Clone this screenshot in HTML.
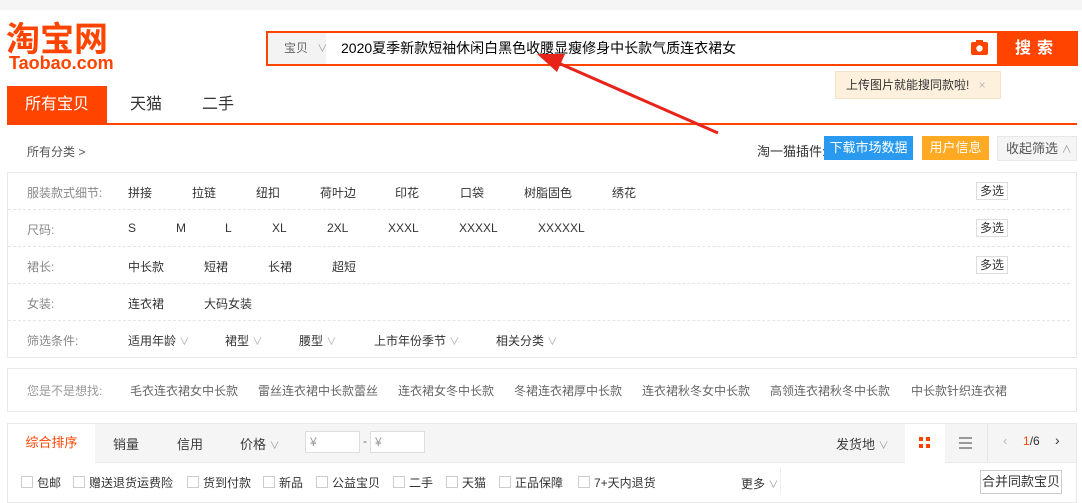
<!DOCTYPE html>
<html><head><meta charset="utf-8"><style>
*{margin:0;padding:0;box-sizing:border-box}
body{width:1082px;height:500px;overflow:hidden;background:#fff;font-family:"Liberation Sans","Noto Sans CJK SC",sans-serif;font-size:12px;color:#3c3c3c;position:relative}
.a{position:absolute;white-space:nowrap}
.row{position:absolute;left:8px;width:1062px;height:37px;border-bottom:1px dashed #e5e5e5}
.row .l{position:absolute;left:19px;top:11px;color:#888}
.row span.v{position:absolute;top:11px;color:#333}
.ms{position:absolute;left:968px;top:9px;border:1px solid #ddd;padding:0 3px;height:18px;line-height:16px;color:#333}
.ck{position:absolute;top:476px;width:12px;height:12px;border:1px solid #ccc;background:#fff}
.ct{position:absolute;top:474px;color:#333}
.sg{position:absolute;top:382px;color:#666}
</style></head><body>
<div class="a" style="left:0;top:0;width:1082px;height:10px;background:#f5f5f5"></div>
<div class="a" style="left:6px;top:20px;font-size:34px;font-weight:bold;color:#ff4400;line-height:40px">淘宝网</div>
<div class="a" style="left:9px;top:54px;font-size:18px;font-weight:bold;color:#ff4400;line-height:18px">Taobao.com</div>
<div class="a" style="left:266px;top:31px;width:812px;height:35px;border:2px solid #ff4400;background:#fff"></div>
<div class="a" style="left:268px;top:33px;width:58px;height:31px;background:#f3f3f3;color:#666;line-height:31px;padding-left:16px">宝贝 <span style="color:#999;font-size:10px;margin-left:6px">∨</span></div>
<div class="a" style="left:341px;top:33px;line-height:31px;font-size:14px;color:#000">2020夏季新款短袖休闲白黑色收腰显瘦修身中长款气质连衣裙女</div>
<svg class="a" style="left:970px;top:39px" width="20" height="18" viewBox="0 0 20 18"><rect x="1" y="3" width="17" height="13" rx="2" fill="#ff4400"/><rect x="6" y="1" width="7" height="4" fill="#ff4400"/><circle cx="9.5" cy="9.5" r="3.2" fill="#fff"/></svg>
<div class="a" style="left:997px;top:31px;width:80px;height:35px;background:#ff4400;color:#fff;font-size:16px;font-weight:bold;line-height:35px;text-align:center;letter-spacing:6px">搜索</div>
<div class="a" style="left:835px;top:71px;width:166px;height:28px;background:#fdf0dd;border:1px solid #f5e3c8;line-height:26px;padding-left:10px;color:#333">上传图片就能搜同款啦! <span style="color:#bbb;margin-left:6px">×</span></div>
<div class="a" style="left:7px;top:86px;width:100px;height:38px;background:#ff4400;color:#fff;font-size:16px;line-height:38px;text-align:center">所有宝贝</div>
<div class="a" style="left:130px;top:86px;font-size:16px;line-height:38px;color:#333">天猫</div>
<div class="a" style="left:202px;top:86px;font-size:16px;line-height:38px;color:#333">二手</div>
<div class="a" style="left:7px;top:123px;width:1070px;height:2px;background:#ff4400"></div>
<div class="a" style="left:27px;top:143px;color:#555">所有分类 &gt;</div>
<div class="a" style="left:757px;top:141px;color:#333;font-size:13px">淘一猫插件:</div>
<div class="a" style="left:824px;top:136px;width:89px;height:24px;background:#2a9af0;color:#fff;line-height:24px;text-align:center;font-size:13px">下载市场数据</div>
<div class="a" style="left:922px;top:136px;width:67px;height:24px;background:#ffaa22;color:#fff;line-height:24px;text-align:center;font-size:13px">用户信息</div>
<div class="a" style="left:997px;top:136px;width:80px;height:25px;background:#f5f5f5;border:1px solid #e8e8e8;color:#555;line-height:23px;padding-left:8px;font-size:13px">收起筛选 <span style="font-size:10px;color:#999">∧</span></div>
<div class="a" style="left:7px;top:172px;width:1070px;height:186px;border:1px solid #e8e8e8"></div>
<div class="row" style="top:173px"><span class="l">服装款式细节:</span><span class="v" style="left:120px">拼接</span><span class="v" style="left:184px">拉链</span><span class="v" style="left:248px">纽扣</span><span class="v" style="left:312px">荷叶边</span><span class="v" style="left:387px">印花</span><span class="v" style="left:452px">口袋</span><span class="v" style="left:516px">树脂固色</span><span class="v" style="left:604px">绣花</span><span class="ms">多选</span></div>
<div class="row" style="top:210px"><span class="l">尺码:</span><span class="v" style="left:120px">S</span><span class="v" style="left:168px">M</span><span class="v" style="left:217px">L</span><span class="v" style="left:264px">XL</span><span class="v" style="left:319px">2XL</span><span class="v" style="left:380px">XXXL</span><span class="v" style="left:451px">XXXXL</span><span class="v" style="left:530px">XXXXXL</span><span class="ms">多选</span></div>
<div class="row" style="top:247px"><span class="l">裙长:</span><span class="v" style="left:120px">中长款</span><span class="v" style="left:196px">短裙</span><span class="v" style="left:260px">长裙</span><span class="v" style="left:324px">超短</span><span class="ms">多选</span></div>
<div class="row" style="top:284px"><span class="l">女装:</span><span class="v" style="left:120px">连衣裙</span><span class="v" style="left:196px">大码女装</span></div>
<div class="row" style="top:321px;border:none"><span class="l">筛选条件:</span><span class="v" style="left:120px">适用年龄 <i style="color:#aaa;font-style:normal;font-size:10px">∨</i></span><span class="v" style="left:217px">裙型 <i style="color:#aaa;font-style:normal;font-size:10px">∨</i></span><span class="v" style="left:291px">腰型 <i style="color:#aaa;font-style:normal;font-size:10px">∨</i></span><span class="v" style="left:366px">上市年份季节 <i style="color:#aaa;font-style:normal;font-size:10px">∨</i></span><span class="v" style="left:488px">相关分类 <i style="color:#aaa;font-style:normal;font-size:10px">∨</i></span></div>
<div class="a" style="left:7px;top:368px;width:1070px;height:44px;border:1px solid #e8e8e8"></div>
<span class="sg" style="left:27px;color:#999">您是不是想找:</span>
<span class="sg" style="left:130px">毛衣连衣裙女中长款</span>
<span class="sg" style="left:258px">雷丝连衣裙中长款蕾丝</span>
<span class="sg" style="left:398px">连衣裙女冬中长款</span>
<span class="sg" style="left:514px">冬裙连衣裙厚中长款</span>
<span class="sg" style="left:642px">连衣裙秋冬女中长款</span>
<span class="sg" style="left:770px">高领连衣裙秋冬中长款</span>
<span class="sg" style="left:911px">中长款针织连衣裙</span>
<div class="a" style="left:7px;top:423px;width:1070px;height:40px;background:#f5f5f5;border:1px solid #e8e8e8"></div>
<div class="a" style="left:8px;top:424px;width:87px;height:39px;background:#fff;color:#ff4400;line-height:38px;text-align:center;font-size:13px">综合排序</div>
<div class="a" style="left:113px;top:434px;font-size:13px">销量</div>
<div class="a" style="left:177px;top:434px;font-size:13px">信用</div>
<div class="a" style="left:240px;top:434px;font-size:13px">价格 <span style="color:#999;font-size:10px">∨</span></div>
<div class="a" style="left:305px;top:431px;width:55px;height:22px;background:#fff;border:1px solid #ddd;color:#999;padding-left:4px;line-height:20px">¥</div>
<div class="a" style="left:363px;top:434px;color:#666">-</div>
<div class="a" style="left:370px;top:431px;width:55px;height:22px;background:#fff;border:1px solid #ddd;color:#999;padding-left:4px;line-height:20px">¥</div>
<div class="a" style="left:836px;top:434px;font-size:13px">发货地 <span style="color:#999;font-size:10px">∨</span></div>
<div class="a" style="left:905px;top:424px;width:40px;height:39px;background:#fff"></div>
<svg class="a" style="left:919px;top:437px" width="12" height="12"><rect x="0" y="0" width="4" height="4" fill="#ff4400"/><rect x="7" y="0" width="4" height="4" fill="#ff4400"/><rect x="0" y="7" width="4" height="4" fill="#ff4400"/><rect x="7" y="7" width="4" height="4" fill="#ff4400"/></svg>
<svg class="a" style="left:959px;top:437px" width="14" height="12"><rect y="0" width="13" height="2" fill="#999"/><rect y="5" width="13" height="2" fill="#999"/><rect y="10" width="13" height="2" fill="#999"/></svg>
<div class="a" style="left:987px;top:424px;width:1px;height:38px;background:#e5e5e5"></div>
<div class="a" style="left:1003px;top:433px;color:#bbb;font-size:13px">‹</div>
<div class="a" style="left:1023px;top:434px;color:#333"><span style="color:#ff4400">1</span>/6</div>
<div class="a" style="left:1055px;top:432px;color:#333;font-size:14px">›</div>
<div class="a" style="left:7px;top:463px;width:1070px;height:40px;border:1px solid #e8e8e8;border-top:none"></div>
<span class="ck" style="left:21px"></span><span class="ct" style="left:37px">包邮</span>
<span class="ck" style="left:73px"></span><span class="ct" style="left:89px">赠送退货运费险</span>
<span class="ck" style="left:187px"></span><span class="ct" style="left:203px">货到付款</span>
<span class="ck" style="left:263px"></span><span class="ct" style="left:279px">新品</span>
<span class="ck" style="left:316px"></span><span class="ct" style="left:332px">公益宝贝</span>
<span class="ck" style="left:393px"></span><span class="ct" style="left:409px">二手</span>
<span class="ck" style="left:446px"></span><span class="ct" style="left:462px">天猫</span>
<span class="ck" style="left:499px"></span><span class="ct" style="left:515px">正品保障</span>
<span class="ck" style="left:578px"></span><span class="ct" style="left:594px">7+天内退货</span>
<div class="a" style="left:741px;top:475px;color:#333">更多 <span style="color:#999;font-size:10px">∨</span></div>
<div class="a" style="left:780px;top:468px;width:1px;height:26px;background:#eee"></div>
<div class="a" style="left:980px;top:470px;width:82px;height:24px;border:1px solid #ccc;line-height:22px;text-align:center;color:#333;font-size:13px">合并同款宝贝</div>
<svg class="a" style="left:0;top:0" width="1082" height="500"><line x1="718" y1="133" x2="556" y2="62" stroke="#e8231a" stroke-width="3"/><polygon points="537,54 565,54 557,72" fill="#e8231a"/></svg>
</body></html>
